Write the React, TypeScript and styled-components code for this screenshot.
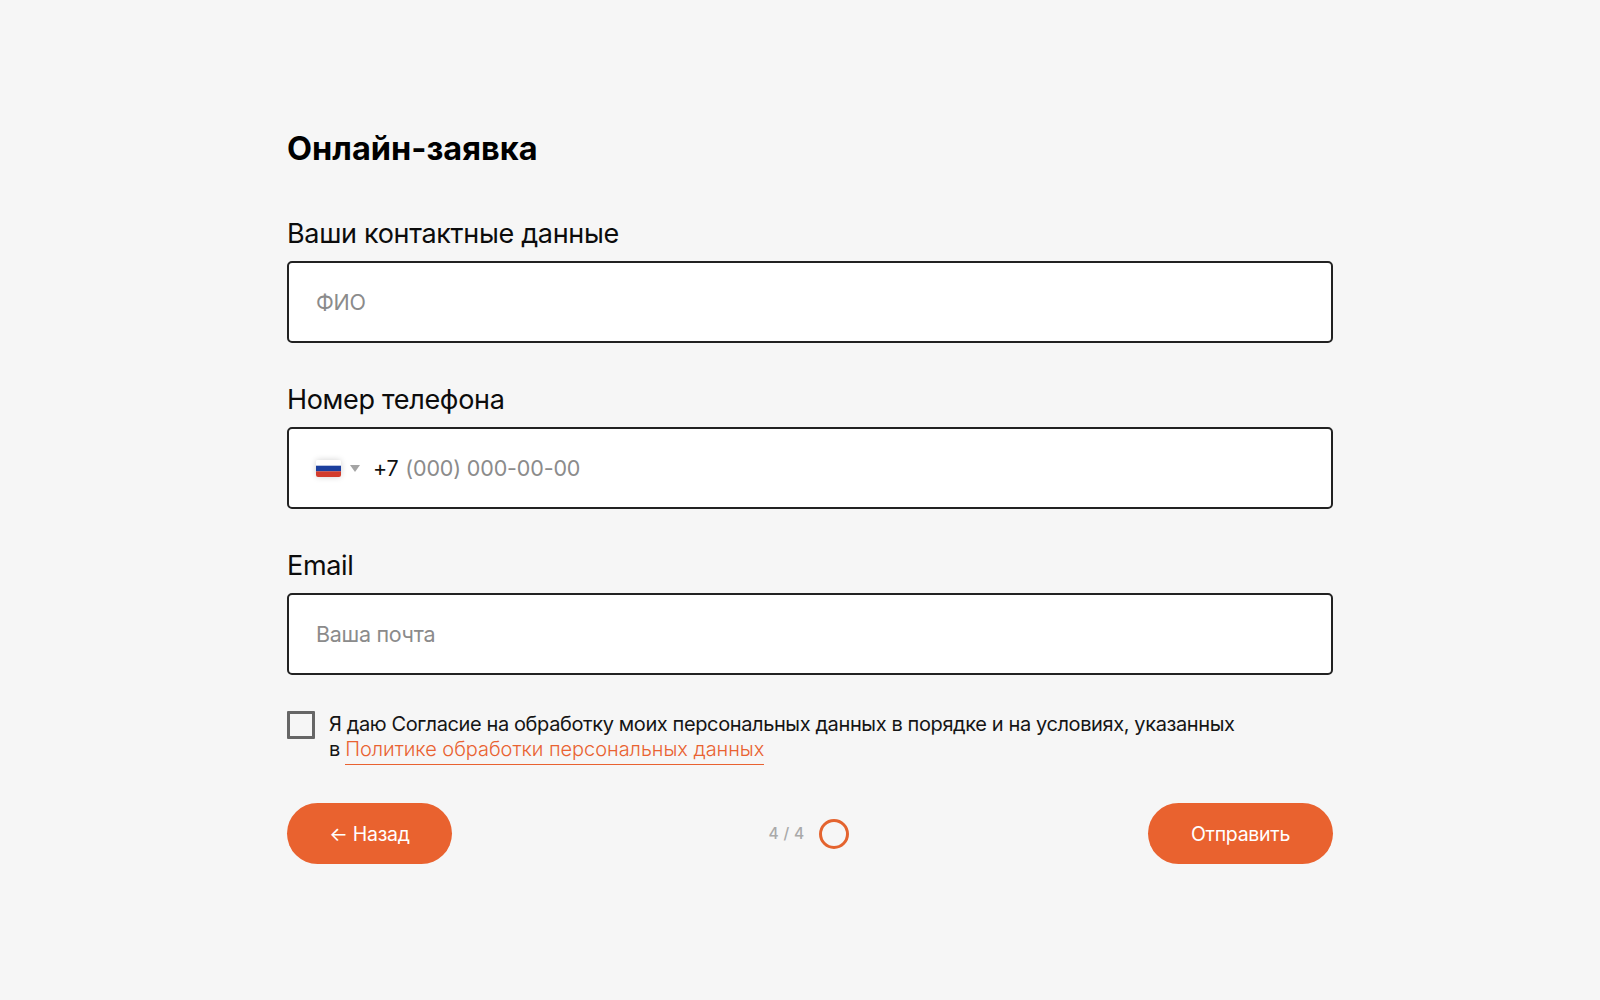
import React from "react";
import styled, { createGlobalStyle } from "styled-components";

const GlobalStyle = createGlobalStyle`
  * {
    box-sizing: border-box;
  }
  body {
    margin: 0;
    background-color: #f6f6f6;
    font-family: "Inter", "Noto Sans", sans-serif;
    color: #0c0c0c;
  }
`;

const Page = styled.div`
  width: 1600px;
  height: 1000px;
  padding: 129px 267px 0 287px;
`;

const Title = styled.h1`
  margin: 0 0 49px;
  font-size: 32.5px;
  line-height: 40px;
  font-weight: 700;
  color: #000;
`;

const Fields = styled.div`
  display: flex;
  flex-direction: column;
  gap: 41px;
`;

const Field = styled.div`
  display: flex;
  flex-direction: column;
  gap: 11px;
`;

const Label = styled.label`
  font-size: 27px;
  line-height: 32px;
  letter-spacing: -0.32px;
`;

const InputBox = styled.div`
  height: 82px;
  display: flex;
  align-items: center;
  padding: 0 27px;
  background-color: #fff;
  border: 2px solid #222;
  border-radius: 5px;
  font-size: 21.5px;
  letter-spacing: -0.3px;
`;

const Placeholder = styled.span<{ $wide?: boolean }>`
  color: #8b8b8b;
  letter-spacing: ${(props) => (props.$wide ? "-0.15px" : "-0.3px")};
`;

const Flag = styled.svg`
  display: block;
  width: 25px;
  height: 17px;
  border-radius: 2px;
  box-shadow: 0 0 6px rgba(0, 0, 0, 0.18);
`;

const Caret = styled.span`
  width: 0;
  height: 0;
  margin: 0 13px 0 9px;
  border-left: 5px solid transparent;
  border-right: 5px solid transparent;
  border-top: 7px solid #a4a4a4;
`;

const Code = styled.span`
  margin-right: 7px;
  color: #111;
`;

const Consent = styled.div`
  display: flex;
  align-items: flex-start;
  gap: 14px;
  margin-top: 36px;
`;

const CheckBox = styled.span`
  flex: none;
  width: 28px;
  height: 28px;
  border: 3px solid #666;
  border-radius: 1px;
`;

const ConsentText = styled.p`
  margin: 0;
  padding-top: 1px;
  font-size: 20px;
  line-height: 25px;
  letter-spacing: -0.39px;
  color: #151515;
`;

const PolicyLink = styled.a`
  color: #e96231;
  font-weight: 300;
  letter-spacing: -0.05px;
  border-bottom: 1px solid #e96231;
  padding-bottom: 3px;
`;

const Footer = styled.div`
  display: flex;
  align-items: center;
  justify-content: space-between;
  margin-top: 41px;
`;

const Button = styled.button<{ $width: number }>`
  width: ${(props) => props.$width}px;
  height: 61px;
  padding: 0;
  background-color: #e9622f;
  color: #fff;
  border: none;
  border-radius: 31px;
  font-family: inherit;
  font-size: 19.5px;
  font-weight: 400;
  letter-spacing: -0.3px;
`;

const Progress = styled.div`
  display: flex;
  align-items: center;
  gap: 15px;
  margin-left: 18px;
`;

const Steps = styled.span`
  font-size: 15.5px;
  font-weight: 500;
  letter-spacing: 0.3px;
  color: #a9a9a9;
`;

const Ring = styled.span`
  width: 30px;
  height: 30px;
  border: 3px solid #e4642f;
  border-radius: 50%;
`;

export default function App() {
  return (
    <Page>
      <GlobalStyle />
      <Title>Онлайн-заявка</Title>
      <Fields>
        <Field>
          <Label>Ваши контактные данные</Label>
          <InputBox>
            <Placeholder>ФИО</Placeholder>
          </InputBox>
        </Field>
        <Field>
          <Label>Номер телефона</Label>
          <InputBox>
            <Flag viewBox="0 0 3 2" preserveAspectRatio="none">
              <rect width="3" height="0.67" y="0" fill="#ffffff" />
              <rect width="3" height="0.67" y="0.67" fill="#1c3f9e" />
              <rect width="3" height="0.67" y="1.33" fill="#d23b2c" />
            </Flag>
            <Caret />
            <Code>+7</Code>
            <Placeholder $wide>(000) 000-00-00</Placeholder>
          </InputBox>
        </Field>
        <Field>
          <Label>Email</Label>
          <InputBox>
            <Placeholder>Ваша почта</Placeholder>
          </InputBox>
        </Field>
      </Fields>
      <Consent>
        <CheckBox />
        <ConsentText>
          Я даю Согласие на обработку моих персональных данных в порядке и на условиях, указанных
          <br />в <PolicyLink>Политике обработки персональных данных</PolicyLink>
        </ConsentText>
      </Consent>
      <Footer>
        <Button $width={165}>← Назад</Button>
        <Progress>
          <Steps>4 / 4</Steps>
          <Ring />
        </Progress>
        <Button $width={185}>Отправить</Button>
      </Footer>
    </Page>
  );
}
